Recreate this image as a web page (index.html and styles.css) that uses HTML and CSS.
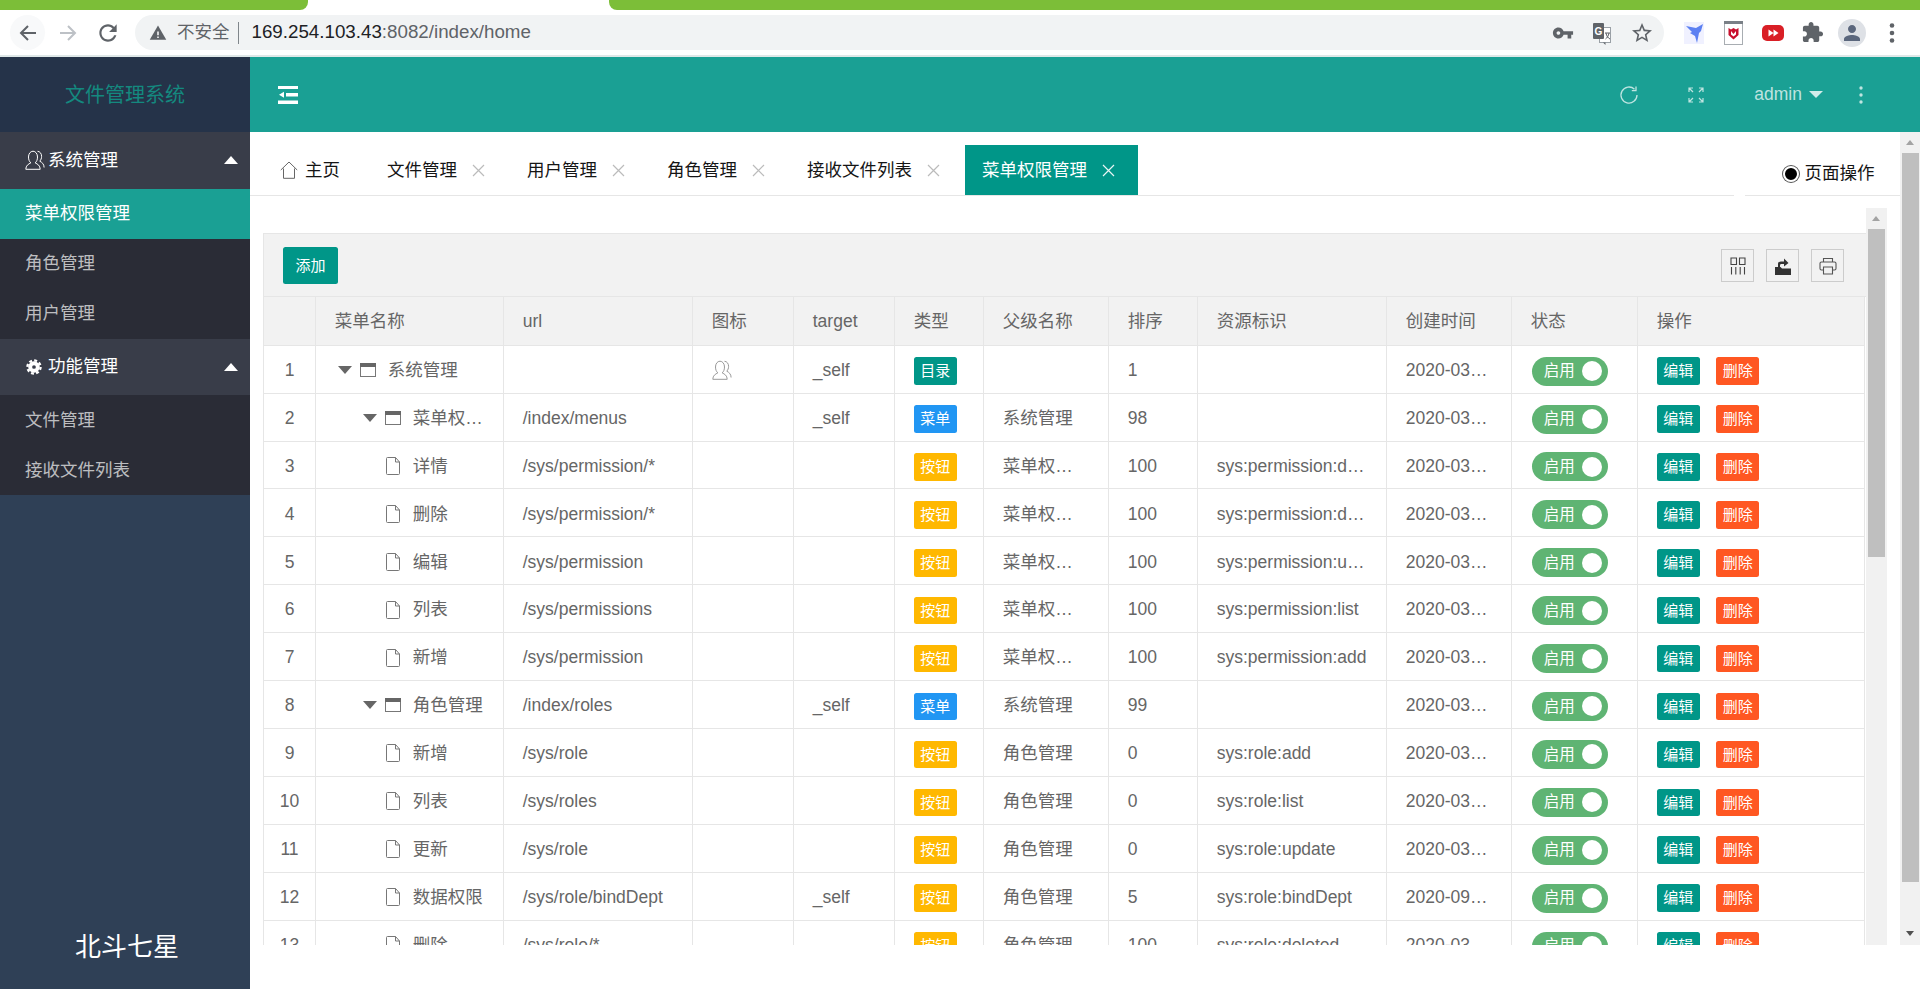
FILE: index.html
```html
<!DOCTYPE html>
<html lang="zh-CN">
<head>
<meta charset="utf-8">
<title>文件管理系统</title>
<link rel="stylesheet" href="styles.css">
</head>
<body>
<svg class="defs" xmlns="http://www.w3.org/2000/svg">
  <symbol id="i-folder" viewBox="0 0 16 14"><rect x=".5" y=".5" width="15" height="13" fill="#fff" stroke="#777"/><rect width="16" height="4" fill="#666"/></symbol>
  <symbol id="i-file" viewBox="0 0 16 18"><path d="M1.5 1.5a1 1 0 0 1 1-1h8l4 4.5v11.500a1 1 0 0 1-1 1h-11a1 1 0 0 1-1-1z" fill="#fff" stroke="#777"/><path d="M10.500.5v4.500h4" fill="none" stroke="#777"/></symbol>
  <symbol id="i-user" viewBox="0 0 20 20"><path d="M.8 19.300c0-3.800 2.700-5.300 5-6.400-1.400-1.300-2.300-3.200-2.300-5.900 0-3.200 1.900-5.800 4.500-5.800s4.500 2.600 4.500 5.800c0 2.700-.9 4.600-2.300 5.900 2.300 1.100 5 2.600 5 6.400z" fill="none" stroke="currentColor"/><path d="M12.500 1.300c2.300 0 4.100 2.300 4.100 5 0 2-.7 3.700-1.800 4.900 2.200 1.200 4.300 2.800 4.300 6.300" fill="none" stroke="currentColor"/></symbol>
  <symbol id="i-x" viewBox="0 0 13 13"><path d="M1 1l11 11M12 1L1 12" fill="none" stroke="currentColor" stroke-width="1.200"/></symbol>
</svg>

<header class="chrome">
  <div class="tabstrip"><div class="strip-left"></div><div class="strip-tab"></div><div class="strip-right"></div></div>
  <div class="toolbar">
    <button class="nav nav-hover"><svg width="22" height="22" viewBox="0 0 22 22"><path d="M19 11H4M11 4l-7 7 7 7" fill="none" stroke="#5f6368" stroke-width="2"/></svg></button>
    <button class="nav"><svg width="22" height="22" viewBox="0 0 22 22"><path d="M3 11h15M11 4l7 7-7 7" fill="none" stroke="#bdc1c6" stroke-width="2"/></svg></button>
    <button class="nav nav-last"><svg width="26" height="26" viewBox="0 0 24 24"><path fill="#5f6368" d="M17.650 6.350C16.200 4.900 14.210 4 12 4c-4.420 0-7.990 3.580-7.990 8s3.570 8 7.990 8c3.730 0 6.840-2.550 7.730-6h-2.080c-.82 2.330-3.040 4-5.650 4-3.310 0-6-2.690-6-6s2.690-6 6-6c1.660 0 3.140.69 4.220 1.780L13 11h7V4l-2.350 2.350z"/></svg></button>
    <div class="omnibox">
      <svg class="warn" width="18" height="18" viewBox="0 0 24 24"><path fill="#5f6368" d="M1 21h22L12 2z"/><path fill="#fff" d="M11 10h2v5h-2zM11 16.500h2v2h-2z"/></svg>
      <span class="insecure">不安全</span><span class="sep"></span>
      <span class="url"><span class="host">169.254.103.43</span>:8082/index/home</span>
      <div class="omni-actions">
        <svg width="22" height="22" viewBox="0 0 24 24"><path fill="#5f6368" d="M12.650 10C11.830 7.670 9.610 6 7 6c-3.310 0-6 2.690-6 6s2.690 6 6 6c2.610 0 4.830-1.670 5.650-4H17v4h4v-4h2v-4H12.650zM7 14c-1.100 0-2-.9-2-2s.9-2 2-2 2 .9 2 2-.9 2-2 2z"/></svg>
        <svg width="22" height="24" viewBox="0 0 22 24"><rect x="8.500" y="6.500" width="11" height="15" fill="#fff" stroke="#9aa0a6"/><path d="M12 21.500l2.500 2.500v-2.500z" fill="#5f6368"/><rect x="2" y="2" width="11" height="16" rx="1" fill="#5f6368"/><text x="7.500" y="14" class="g-mark">G</text><path d="M14 12h5M15 12c.5 3 2 5 4 6M18 12c-.5 3-2 5-3.500 6" fill="none" stroke="#5f6368"/></svg>
        <svg width="24" height="24" viewBox="0 0 24 24"><path fill="#5f6368" d="M22 9.240l-7.190-.62L12 2 9.190 8.630 2 9.240l5.460 4.730L5.820 21 12 17.270 18.180 21l-1.630-7.030L22 9.240zM12 15.400l-3.760 2.270 1-4.280-3.320-2.880 4.380-.38L12 6.100l1.710 4.040 4.380.38-3.320 2.880 1 4.280L12 15.400z"/></svg>
      </div>
    </div>
    <div class="extensions">
      <svg width="28" height="28" viewBox="0 0 28 28"><rect x="4" y="3" width="20" height="22" fill="#f0f1ff"/><path d="M23 5l-7 4-10-2 6 6-2 1 5 3 2 7 2-10 2-2z" fill="#5c80f2"/></svg>
      <svg width="28" height="28" viewBox="0 0 28 28"><rect x="4.500" y="2.500" width="18" height="23" fill="#fff" stroke="#a8adb2"/><rect x="4" y="2" width="19" height="3" fill="#7a8087"/><path d="M8.500 9l2.500 1.500L13.500 9l2.500 1.500L18.500 9v7l-5 4.500-5-4.500z" fill="#c8102e"/><path d="M11 12v3.500l2.500 2 2.500-2V12l-2.500 3z" fill="#fff"/></svg>
      <svg width="28" height="28" viewBox="0 0 28 28"><rect x="3" y="6" width="22" height="16" rx="5" fill="#d91f26"/><path d="M9.500 10.500v7l5-3.500zM14.500 10.500v7l5-3.500z" fill="#fff"/></svg>
      <span class="ext-slot"><svg width="23" height="23" viewBox="0 0 24 24"><path fill="#5f6368" d="M20.500 11H19V7c0-1.100-.9-2-2-2h-4V3.500C13 2.120 11.880 1 10.500 1S8 2.120 8 3.500V5H4c-1.100 0-1.990.9-1.990 2v3.800H3.500c1.490 0 2.700 1.210 2.700 2.700s-1.210 2.700-2.700 2.700H2V20c0 1.100.9 2 2 2h3.800v-1.500c0-1.490 1.210-2.700 2.700-2.700 1.490 0 2.700 1.210 2.700 2.700V22H17c1.100 0 2-.9 2-2v-4h1.500c1.380 0 2.500-1.120 2.500-2.500S21.880 11 20.500 11z"/></svg></span>
      <span class="avatar"><svg width="24" height="24" viewBox="0 0 24 24"><path fill="#5b677d" d="M12 12c2.210 0 4-1.790 4-4s-1.790-4-4-4-4 1.790-4 4 1.790 4 4 4zm0 2c-2.670 0-8 1.340-8 4v2h16v-2c0-2.660-5.330-4-8-4z"/></svg></span>
      <svg width="28" height="28" viewBox="0 0 28 28"><circle cx="14" cy="6.500" r="2.300" fill="#5f6368"/><circle cx="14" cy="14" r="2.300" fill="#5f6368"/><circle cx="14" cy="21.500" r="2.300" fill="#5f6368"/></svg>
    </div>
  </div>
</header>

<div class="shell">
  <aside class="sidebar">
    <div class="logo">文件管理系统</div>
    <div class="group">
      <svg class="group-icon icon-user" width="20" height="20"><use href="#i-user"/></svg><span>系统管理</span><i class="group-caret"></i>
    </div>
    <ul class="submenu">
      <li class="active">菜单权限管理</li>
      <li>角色管理</li>
      <li>用户管理</li>
    </ul>
    <div class="group group-low">
      <svg class="group-icon icon-gear" width="16" height="16" viewBox="0 0 18 18"><circle cx="9" cy="9" r="4.300" fill="none" stroke="#fff" stroke-width="4.400"/><circle cx="9" cy="9" r="7.400" fill="none" stroke="#fff" stroke-width="2.600" stroke-dasharray="3.300 2.510"/></svg><span>功能管理</span><i class="group-caret"></i>
    </div>
    <ul class="submenu submenu-low">
      <li>文件管理</li>
      <li>接收文件列表</li>
    </ul>
    <div class="side-foot">北斗七星</div>
  </aside>

  <main class="main">
    <div class="topbar">
      <svg class="fold" width="20" height="18" viewBox="0 0 20 18"><path d="M0 0h20v3H0zM8 7h12v3.500H8zM0 14.500h20V18H0zM1 8.800L6 5.800v6z" fill="#fff"/></svg>
      <div class="top-right">
        <svg class="t-refresh" width="20" height="20" viewBox="0 0 20 20"><path d="M15.500 4.200A8 8 0 1 0 18 10" fill="none" stroke="currentColor" stroke-width="1.300"/><path d="M17 1.500v4.200h-4.200" fill="none" stroke="currentColor" stroke-width="1.300"/></svg>
        <svg class="t-expand" width="16" height="16" viewBox="0 0 16 16"><path d="M1 5V1h4M1 1l4 4M11 1h4v4M15 1l-4 4M1 11v4h4M1 15l4-4M15 11v4h-4M15 15l-4-4" fill="none" stroke="currentColor" stroke-width="1.200"/></svg>
        <span class="admin">admin</span><i class="admin-caret"></i>
        <svg class="t-dots" width="4" height="18" viewBox="0 0 4 18"><circle cx="2" cy="2" r="1.700" fill="currentColor"/><circle cx="2" cy="9" r="1.700" fill="currentColor"/><circle cx="2" cy="16" r="1.700" fill="currentColor"/></svg>
      </div>
    </div>

    <div class="workarea">
      <div class="work">
        <div class="tabsbar">
          <nav class="tablist">
            <div class="tab tab-home"><svg width="18" height="18" viewBox="0 0 18 18"><path d="M.8 9L9 1l8.200 8M3.500 7.500v9.800h11V7.500" fill="none" stroke="#666"/></svg><span>主页</span></div>
            <div class="tab"><span>文件管理</span><svg class="tab-x" width="13" height="13"><use href="#i-x"/></svg></div>
            <div class="tab"><span>用户管理</span><svg class="tab-x" width="13" height="13"><use href="#i-x"/></svg></div>
            <div class="tab"><span>角色管理</span><svg class="tab-x" width="13" height="13"><use href="#i-x"/></svg></div>
            <div class="tab"><span>接收文件列表</span><svg class="tab-x" width="13" height="13"><use href="#i-x"/></svg></div>
            <div class="tab tab-active"><span>菜单权限管理</span><svg class="tab-x" width="13" height="13"><use href="#i-x"/></svg></div>
          </nav>
          <div class="pageop"><i class="pageop-dot"></i><span>页面操作</span></div>
        </div>

        <div class="content">
          <section class="panel">
            <div class="tbl-tools">
              <button class="btn-add">添加</button>
              <div class="tools-right">
                <span class="tool"><svg width="16" height="18" viewBox="0 0 16 18"><path d="M1 1h5.500v6.500H1zM9.500 1H15v6.500H9.500zM1.500 10v7.500M5.800 10v7.500M10.200 10v7.500M14.500 10v7.500" fill="none" stroke="#444" stroke-width="1.100"/></svg></span>
                <span class="tool"><svg width="16" height="18" viewBox="0 0 16 18"><path d="M0 10h5.500L7 11.500h9V18H0z" fill="#333"/><path d="M3 10V7C3 5.200 4.200 4.400 6 4.400h3V1.500L13.500 6 9 9.500V7H6.500C5.500 7 5 7.500 5 8.500V10z" fill="#333"/></svg></span>
                <span class="tool"><svg width="18" height="18" viewBox="0 0 18 18"><path d="M4.500 5V1.500h9V5M4.500 13H2.500a1.500 1.500 0 0 1-1.500-1.500v-5A1.500 1.500 0 0 1 2.500 5h13A1.500 1.500 0 0 1 17 6.500v5a1.500 1.500 0 0 1-1.500 1.500h-2M4.500 10h9v7h-9z" fill="none" stroke="#555" stroke-width="1.100"/></svg></span>
              </div>
            </div>
            <table class="grid">
              <colgroup><col class="c-no"><col class="c-name"><col class="c-url"><col class="c-icon"><col class="c-target"><col class="c-type"><col class="c-parent"><col class="c-sort"><col class="c-res"><col class="c-time"><col class="c-state"><col class="c-ops"></colgroup>
              <thead><tr><th></th><th>菜单名称</th><th>url</th><th>图标</th><th>target</th><th>类型</th><th>父级名称</th><th>排序</th><th>资源标识</th><th>创建时间</th><th>状态</th><th>操作</th></tr></thead>
              <tbody>
                <tr><td class="no">1</td><td><div class="tree"><i class="caret"></i><svg class="ti" width="16" height="14"><use href="#i-folder"/></svg><span class="tname">系统管理</span></div></td><td></td><td><svg class="uicon" width="20" height="20"><use href="#i-user"/></svg></td><td>_self</td><td><span class="tag t-green">目录</span></td><td></td><td>1</td><td></td><td>2020-03-11 10:30:21</td><td><span class="sw">启用<i></i></span></td><td><div class="ops"><span class="tag t-green">编辑</span><span class="tag t-red">删除</span></div></td></tr>
                <tr><td class="no">2</td><td><div class="tree lv1"><i class="caret"></i><svg class="ti" width="16" height="14"><use href="#i-folder"/></svg><span class="tname">菜单权限管理</span></div></td><td>/index/menus</td><td></td><td>_self</td><td><span class="tag t-blue">菜单</span></td><td>系统管理</td><td>98</td><td></td><td>2020-03-11 10:30:21</td><td><span class="sw">启用<i></i></span></td><td><div class="ops"><span class="tag t-green">编辑</span><span class="tag t-red">删除</span></div></td></tr>
                <tr><td class="no">3</td><td><div class="tree lv1"><i class="caret none"></i><svg class="ti" width="16" height="18"><use href="#i-file"/></svg><span class="tname">详情</span></div></td><td>/sys/permission/*</td><td></td><td></td><td><span class="tag t-amber">按钮</span></td><td>菜单权限管理</td><td>100</td><td>sys:permission:detail</td><td>2020-03-11 10:30:21</td><td><span class="sw">启用<i></i></span></td><td><div class="ops"><span class="tag t-green">编辑</span><span class="tag t-red">删除</span></div></td></tr>
                <tr><td class="no">4</td><td><div class="tree lv1"><i class="caret none"></i><svg class="ti" width="16" height="18"><use href="#i-file"/></svg><span class="tname">删除</span></div></td><td>/sys/permission/*</td><td></td><td></td><td><span class="tag t-amber">按钮</span></td><td>菜单权限管理</td><td>100</td><td>sys:permission:delete</td><td>2020-03-11 10:30:21</td><td><span class="sw">启用<i></i></span></td><td><div class="ops"><span class="tag t-green">编辑</span><span class="tag t-red">删除</span></div></td></tr>
                <tr><td class="no">5</td><td><div class="tree lv1"><i class="caret none"></i><svg class="ti" width="16" height="18"><use href="#i-file"/></svg><span class="tname">编辑</span></div></td><td>/sys/permission</td><td></td><td></td><td><span class="tag t-amber">按钮</span></td><td>菜单权限管理</td><td>100</td><td>sys:permission:update</td><td>2020-03-11 10:30:21</td><td><span class="sw">启用<i></i></span></td><td><div class="ops"><span class="tag t-green">编辑</span><span class="tag t-red">删除</span></div></td></tr>
                <tr><td class="no">6</td><td><div class="tree lv1"><i class="caret none"></i><svg class="ti" width="16" height="18"><use href="#i-file"/></svg><span class="tname">列表</span></div></td><td>/sys/permissions</td><td></td><td></td><td><span class="tag t-amber">按钮</span></td><td>菜单权限管理</td><td>100</td><td>sys:permission:list</td><td>2020-03-11 10:30:21</td><td><span class="sw">启用<i></i></span></td><td><div class="ops"><span class="tag t-green">编辑</span><span class="tag t-red">删除</span></div></td></tr>
                <tr><td class="no">7</td><td><div class="tree lv1"><i class="caret none"></i><svg class="ti" width="16" height="18"><use href="#i-file"/></svg><span class="tname">新增</span></div></td><td>/sys/permission</td><td></td><td></td><td><span class="tag t-amber">按钮</span></td><td>菜单权限管理</td><td>100</td><td>sys:permission:add</td><td>2020-03-11 10:30:21</td><td><span class="sw">启用<i></i></span></td><td><div class="ops"><span class="tag t-green">编辑</span><span class="tag t-red">删除</span></div></td></tr>
                <tr><td class="no">8</td><td><div class="tree lv1"><i class="caret"></i><svg class="ti" width="16" height="14"><use href="#i-folder"/></svg><span class="tname">角色管理</span></div></td><td>/index/roles</td><td></td><td>_self</td><td><span class="tag t-blue">菜单</span></td><td>系统管理</td><td>99</td><td></td><td>2020-03-11 10:30:21</td><td><span class="sw">启用<i></i></span></td><td><div class="ops"><span class="tag t-green">编辑</span><span class="tag t-red">删除</span></div></td></tr>
                <tr><td class="no">9</td><td><div class="tree lv1"><i class="caret none"></i><svg class="ti" width="16" height="18"><use href="#i-file"/></svg><span class="tname">新增</span></div></td><td>/sys/role</td><td></td><td></td><td><span class="tag t-amber">按钮</span></td><td>角色管理</td><td>0</td><td>sys:role:add</td><td>2020-03-11 10:30:21</td><td><span class="sw">启用<i></i></span></td><td><div class="ops"><span class="tag t-green">编辑</span><span class="tag t-red">删除</span></div></td></tr>
                <tr><td class="no">10</td><td><div class="tree lv1"><i class="caret none"></i><svg class="ti" width="16" height="18"><use href="#i-file"/></svg><span class="tname">列表</span></div></td><td>/sys/roles</td><td></td><td></td><td><span class="tag t-amber">按钮</span></td><td>角色管理</td><td>0</td><td>sys:role:list</td><td>2020-03-11 10:30:21</td><td><span class="sw">启用<i></i></span></td><td><div class="ops"><span class="tag t-green">编辑</span><span class="tag t-red">删除</span></div></td></tr>
                <tr><td class="no">11</td><td><div class="tree lv1"><i class="caret none"></i><svg class="ti" width="16" height="18"><use href="#i-file"/></svg><span class="tname">更新</span></div></td><td>/sys/role</td><td></td><td></td><td><span class="tag t-amber">按钮</span></td><td>角色管理</td><td>0</td><td>sys:role:update</td><td>2020-03-11 10:30:21</td><td><span class="sw">启用<i></i></span></td><td><div class="ops"><span class="tag t-green">编辑</span><span class="tag t-red">删除</span></div></td></tr>
                <tr><td class="no">12</td><td><div class="tree lv1"><i class="caret none"></i><svg class="ti" width="16" height="18"><use href="#i-file"/></svg><span class="tname">数据权限</span></div></td><td>/sys/role/bindDept</td><td></td><td>_self</td><td><span class="tag t-amber">按钮</span></td><td>角色管理</td><td>5</td><td>sys:role:bindDept</td><td>2020-09-18 10:30:21</td><td><span class="sw">启用<i></i></span></td><td><div class="ops"><span class="tag t-green">编辑</span><span class="tag t-red">删除</span></div></td></tr>
                <tr><td class="no">13</td><td><div class="tree lv1"><i class="caret none"></i><svg class="ti" width="16" height="18"><use href="#i-file"/></svg><span class="tname">删除</span></div></td><td>/sys/role/*</td><td></td><td></td><td><span class="tag t-amber">按钮</span></td><td>角色管理</td><td>100</td><td>sys:role:deleted</td><td>2020-03-11 10:30:21</td><td><span class="sw">启用<i></i></span></td><td><div class="ops"><span class="tag t-green">编辑</span><span class="tag t-red">删除</span></div></td></tr>
              </tbody>
            </table>
          </section>
          <div class="vbar vbar-inner"><i class="arrow-up"></i><i class="thumb"></i></div>
        </div>
      </div>
      <div class="vbar vbar-outer"><i class="arrow-up"></i><i class="thumb"></i><i class="arrow-down"></i></div>
    </div>
  </main>
</div>
</body>
</html>
```
FILE: styles.css
```css
* { box-sizing: border-box; }
html, body { margin: 0; height: 100%; }
body {
  display: flex;
  flex-direction: column;
  height: 989px;
  overflow: hidden;
  background: #fff;
  color: #666;
  font: 17.5px/1.4 "Liberation Sans", "Noto Sans CJK SC", sans-serif;
}
ul { margin: 0; padding: 0; list-style: none; }
i { display: block; font-style: normal; }
button { border: 0; padding: 0; background: none; font: inherit; }
svg { display: block; flex: none; }
.defs { display: none; }

/* browser chrome */
.chrome { flex: none; height: 57px; border-bottom: 2px solid #dfe8e8; }
.tabstrip { display: flex; height: 10px; }
.strip-left { width: 308px; background: #7cbe38; border-bottom-right-radius: 8px; }
.strip-tab { width: 301px; background: #fff; }
.strip-right { flex: 1; background: #7cbe38; border-bottom-left-radius: 8px; }
.toolbar { display: flex; align-items: center; height: 45px; padding: 0 10px 0 10px; }
.nav { display: flex; align-items: center; justify-content: center; width: 35px; height: 35px; margin-right: 5px; border-radius: 50%; }
.nav-hover { background: #f8f9fa; }
.nav-last { margin-right: 10px; }
.omnibox { display: flex; align-items: center; width: 1529px; height: 35px; padding: 0 10px 0 14px; border-radius: 18px; background: #f1f3f4; color: #5f6368; }
.warn { margin-right: 10px; }
.insecure { font-size: 17.5px; }
.sep { width: 1px; height: 22px; margin: 0 13px 0 8px; background: #80868b; }
.url { font-size: 18.750px; white-space: nowrap; }
.host { color: #202124; }
.omni-actions { display: flex; align-items: center; gap: 17px; margin-left: auto; }
.g-mark { fill: #fff; font: bold 10px "Liberation Sans", sans-serif; text-anchor: middle; }
.extensions { display: flex; align-items: center; gap: 11.600px; margin-left: 16px; }
.ext-slot { display: flex; align-items: center; justify-content: center; width: 28px; height: 28px; }
.avatar { display: flex; align-items: center; justify-content: center; width: 28px; height: 28px; border-radius: 50%; background: #dee1e6; }

/* application shell */
.shell { flex: 1; display: flex; min-height: 0; }
.sidebar { flex: none; display: flex; flex-direction: column; width: 250px; background: #2f4056; }
.logo { height: 75px; line-height: 76px; text-align: center; font-size: 20px; color: #14897f; background: #253349; }
.group { display: flex; align-items: center; height: 56.500px; padding: 0 12px 0 25px; font-size: 17.5px; line-height: 54px; color: #fff; background: #393d49; }
.group-low span { margin-top: -2px; }
.group-icon { color: #fff; }
.icon-user { margin-right: 3px; }
.icon-gear { margin: 0 6px 0 1px; }
.group-caret { width: 0; height: 0; margin-left: auto; margin-right: 0; border: solid transparent; border-width: 0 7.500px 8px; border-bottom-color: #fff; }
.submenu { background: #2a2c36; }
.submenu li { height: 50px; line-height: 48px; padding-left: 25px; color: rgba(255, 255, 255, .7); }
.submenu-low li { line-height: 50px; }
.submenu .active { color: #fff; background: #1aa094; }
.side-foot { margin-top: auto; padding: 0 0 27px 4px; line-height: 30px; text-align: center; font-size: 26px; color: #fff; }

.main { flex: 1; min-width: 0; display: flex; flex-direction: column; }
.topbar { flex: none; display: flex; align-items: center; height: 75px; padding: 0 0 0 28px; background: #1aa094; }
.top-right { display: flex; align-items: center; margin-left: auto; color: rgba(255, 255, 255, .72); }
.t-refresh { margin-right: 49px; }
.t-expand { margin-right: 50px; }
.admin { margin-right: 7px; }
.admin-caret { width: 0; height: 0; margin-right: 36px; border: solid transparent; border-width: 7px 7px 0; border-top-color: rgba(255, 255, 255, .8); }
.t-dots { margin-right: 57px; }

.workarea { flex: none; display: flex; height: 813px; }
.work { flex: 1; min-width: 0; display: flex; flex-direction: column; }

.tabsbar { flex: none; display: flex; height: 64px; color: #151515; }
.tablist { flex: 1; display: flex; align-items: flex-end; height: 64px; padding-left: 30px; border-bottom: 1px solid #e6e6e6; }
.tab { display: flex; align-items: center; height: 50px; padding: 0 21px; white-space: nowrap; }
.tab-x { margin-left: 15px; color: #bbb; }
.tab-home { padding: 0 26px 0 0; }
.tab-home svg { margin-right: 7px; }
.tab-active { margin-left: 4px; padding: 0 23px 0 17px; color: #fff; background: #009688; }
.tab-active .tab-x { color: #e8f5f4; }
.pageop { display: flex; align-items: center; gap: 5.500px; width: 155px; margin-left: 11px; padding: 20px 0 0 38px; border-bottom: 1px solid #e6e6e6; }
.pageop-dot { width: 16px; height: 16px; border-radius: 50%; background: #000; border: 2px solid #fff; box-shadow: 0 0 0 1px #555; }

.content { flex: 1; min-height: 0; display: flex; padding-left: 13px; padding-right: 13px; overflow: hidden; }
.panel { flex: 1; min-width: 0; margin-top: 37px; border-left: 1px solid #e6e6e6; }
.tbl-tools { display: flex; align-items: center; height: 64px; padding: 1px 22px 0 19px; background: #f2f2f2; border-top: 1px solid #e6e6e6; border-bottom: 1px solid #e6e6e6; }
.btn-add { width: 55px; height: 37.500px; border-radius: 2.500px; color: #fff; font-size: 15px; background: #009688; }
.tools-right { display: flex; gap: 12px; margin-left: auto; }
.tool { display: flex; align-items: center; justify-content: center; width: 33px; height: 33px; border: 1px solid #ccc; }

.grid { width: 1601px; table-layout: fixed; border-collapse: separate; border-spacing: 0; }
.c-no { width: 52px; } .c-name { width: 188px; } .c-url { width: 189px; } .c-icon { width: 101px; } .c-target { width: 101px; }
.c-type { width: 89px; } .c-parent { width: 125px; } .c-sort { width: 89px; } .c-res { width: 189px; } .c-time { width: 125px; }
.c-state { width: 126px; } .c-ops { width: 227px; }
.grid th, .grid td {
  padding: 0 18.750px;
  border-right: 1px solid #e6e6e6;
  border-bottom: 1px solid #e6e6e6;
  overflow: hidden;
  white-space: nowrap;
  text-overflow: ellipsis;
  text-align: left;
  font-weight: 400;
}
.grid th { height: 48.700px; background: #f2f2f2; }
.grid td { height: 47.920px; padding-top: 2px; }
.grid .no { padding: 2px 0 0; text-align: center; }

.tree { display: flex; align-items: center; }
.tree.lv1 { padding-left: 25px; }
.caret { flex: none; width: 0; height: 0; margin: 0 8px 0 3px; border: solid transparent; border-width: 8px 7px 0; border-top-color: #666; }
.caret.none { border-top-color: transparent; }
.ti { margin-right: 12px; }
.tname { min-width: 0; overflow: hidden; text-overflow: ellipsis; }
.uicon { color: #999; }

.tag { display: inline-block; height: 27.500px; margin-top: 2px; line-height: 27.500px; padding: 0 6.500px; border-radius: 2.500px; color: #fff; font-size: 15px; vertical-align: middle; }
.t-green { background: #009688; }
.t-blue { background: #2196f3; }
.t-amber { background: #ffb800; }
.t-red { background: #ff5722; }
.ops { display: flex; gap: 16.500px; }

.sw { display: inline-flex; align-items: center; justify-content: space-between; width: 76px; height: 29px; margin: 2px 0 0 1px; padding: 0 6px 0 12px; border-radius: 15px; color: #fff; font-size: 15.500px; background: #5fb473; vertical-align: middle; }
.sw i { width: 20px; height: 20px; border-radius: 50%; background: #fff; }

/* scrollbars */
.vbar { position: relative; flex: none; background: #f1f1f1; }
.vbar .thumb { background: #bfbfbf; }
.vbar-inner { width: 21px; margin-top: 12px; padding: 21px 2px 0; }
.vbar-inner .thumb { width: 17px; height: 328px; }
.vbar-outer { width: 20px; padding: 21px 1px 0 2px; }
.vbar-outer .thumb { width: 17px; height: 729px; }
.arrow-up { position: absolute; top: 8px; left: 50%; width: 0; height: 0; margin-left: -4.500px; border: solid transparent; border-width: 0 4.500px 5px; border-bottom-color: #a3a3a3; }
.arrow-down { position: absolute; bottom: 9px; left: 50%; width: 0; height: 0; margin-left: -4.500px; border: solid transparent; border-width: 5px 4.500px 0; border-top-color: #505050; }
```
